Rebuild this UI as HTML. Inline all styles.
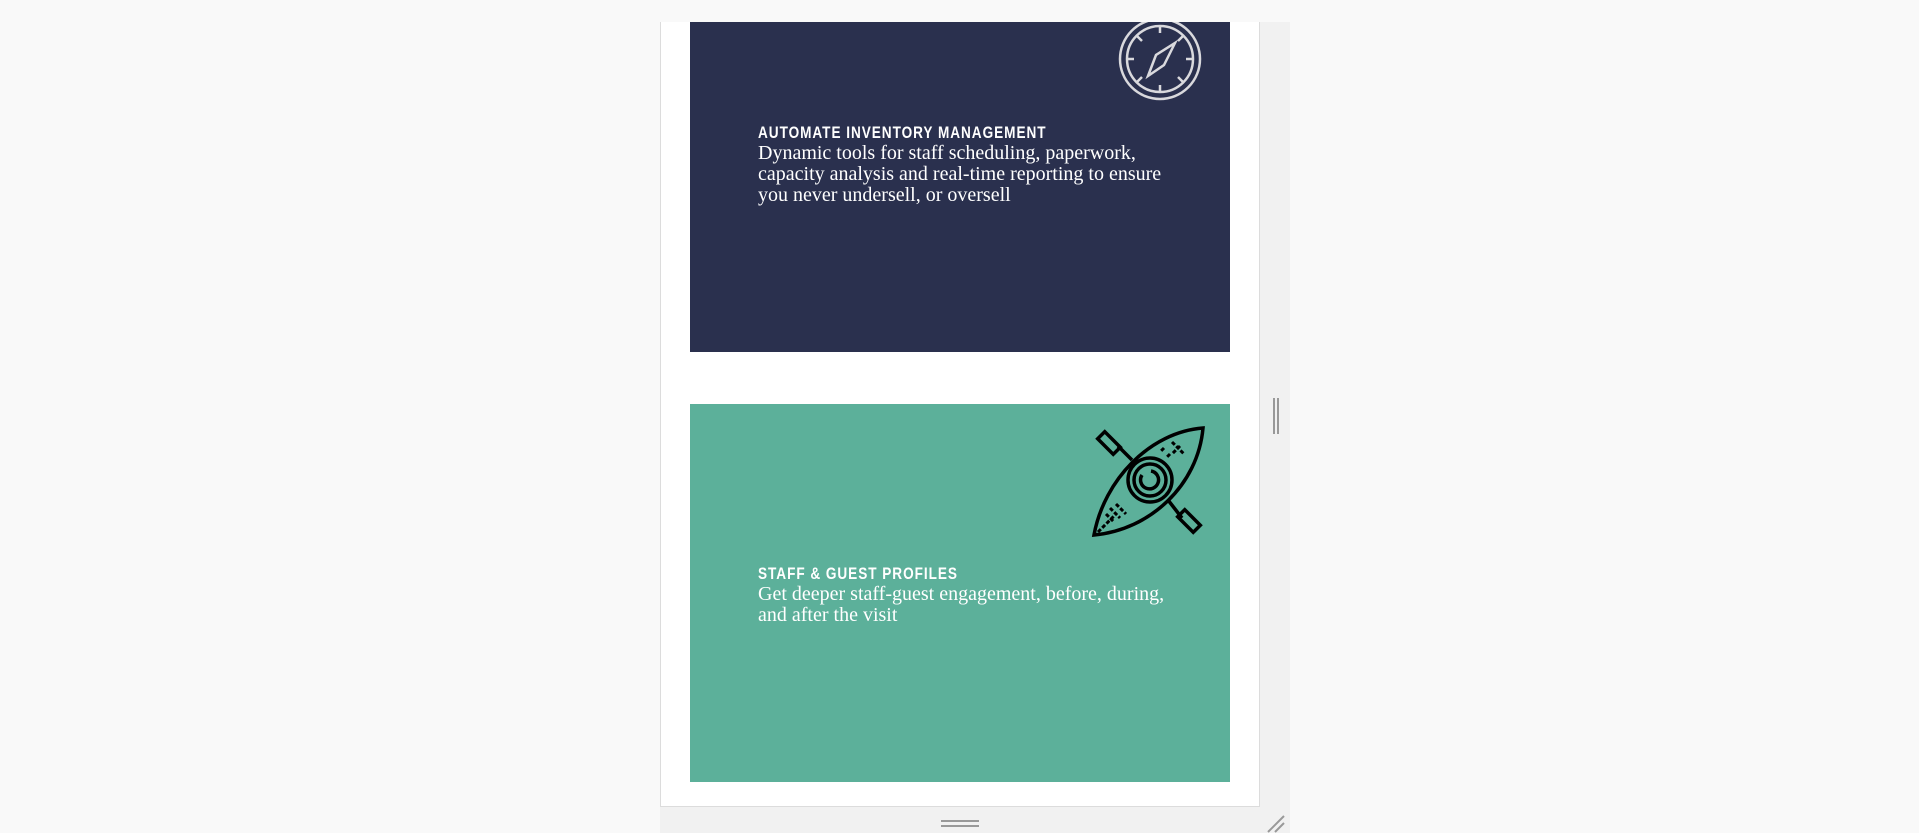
<!DOCTYPE html>
<html><head><meta charset="utf-8"><style>
html,body{margin:0;padding:0;width:1919px;height:833px;background:#f9f9f9;overflow:hidden;position:relative}
.strip{position:absolute;left:660px;top:22px;width:630px;height:811px;background:#f1f1f1}
.frame{position:absolute;left:660px;top:22px;width:600px;height:785px;background:#fff;border:1px solid #dcdcdc;border-top:none;box-sizing:border-box}
.card{position:absolute;left:690px;width:540px;overflow:hidden}
.dark{top:22px;height:330px;background:#2a304e}
.teal{top:404px;height:378px;background:#5cb09a}
.txt{position:absolute;left:68px;color:#fff}
.h{font-family:"Liberation Sans",sans-serif;font-weight:bold;font-size:17px;letter-spacing:1.2px;line-height:20px;transform:scaleX(0.8);transform-origin:0 0;white-space:nowrap}
.b{font-family:"Liberation Serif",serif;font-size:20px;line-height:21px;white-space:nowrap}
</style></head><body>
<div class="strip"></div>
<div class="frame"></div>
<div class="card dark">
  <svg style="position:absolute;left:426px;top:-7px" width="88" height="88" viewBox="0 0 88 88" fill="none" stroke="#d9d9dd" stroke-width="2.5">
    <circle cx="44" cy="44" r="40"/><circle cx="44" cy="44" r="33"/>
    <path d="M44 11v7M44 70v7M11 44h7M70 44h7M21 21l5 5M67 21l-5 5M21 67l5-5M67 67l-5-5"/>
    <path d="M59 28L48 50L32 61L40 40Z"/>
  </svg>
  <div class="txt" style="top:101px">
    <div class="h">AUTOMATE INVENTORY MANAGEMENT</div>
    <div class="b">Dynamic tools for staff scheduling, paperwork,<br>capacity analysis and real-time reporting to ensure<br>you never undersell, or oversell</div>
  </div>
</div>
<div class="card teal">
  <svg style="position:absolute;left:400px;top:16px" width="120" height="120" viewBox="0 0 120 120" fill="none" stroke="#000" stroke-width="3.5">
    <path d="M113 8C60 12 14 60 4 115C60 110 108 65 113 8Z"/>
    <circle cx="60" cy="60" r="22"/><circle cx="60" cy="60" r="16"/>
    <path d="M52 55a9 9 0 1 0 9-4"/>
    <path d="M28 26L42 40M78 80L92 98"/>
    <rect x="14" y="12" width="10" height="22" transform="rotate(-45 19 23)"/>
    <rect x="94" y="90" width="10" height="22" transform="rotate(-45 99 101)"/>
    <path d="M82 22l12 12M90 26l-8 8M74 28l-4 4M80 34l-4 4M26 84l10 10M20 88l10 10M16 94l8 8M8 112l16-16" stroke-dasharray="4 2" stroke-width="3"/>
  </svg>
  <div class="txt" style="top:160px">
    <div class="h">STAFF &amp; GUEST PROFILES</div>
    <div class="b">Get deeper staff-guest engagement, before, during,<br>and after the visit</div>
  </div>
</div>
<div style="position:absolute;left:1273px;top:398px;width:2px;height:36px;background:#999"></div>
<div style="position:absolute;left:1277px;top:398px;width:2px;height:36px;background:#999"></div>
<div style="position:absolute;left:941px;top:820px;width:38px;height:2px;background:#999"></div>
<div style="position:absolute;left:941px;top:825px;width:38px;height:2px;background:#999"></div>
<svg style="position:absolute;left:1266px;top:814px" width="20" height="19"><path d="M2 18L18 2M9 18L18 9" stroke="#999" stroke-width="2"/></svg>
</body></html>
